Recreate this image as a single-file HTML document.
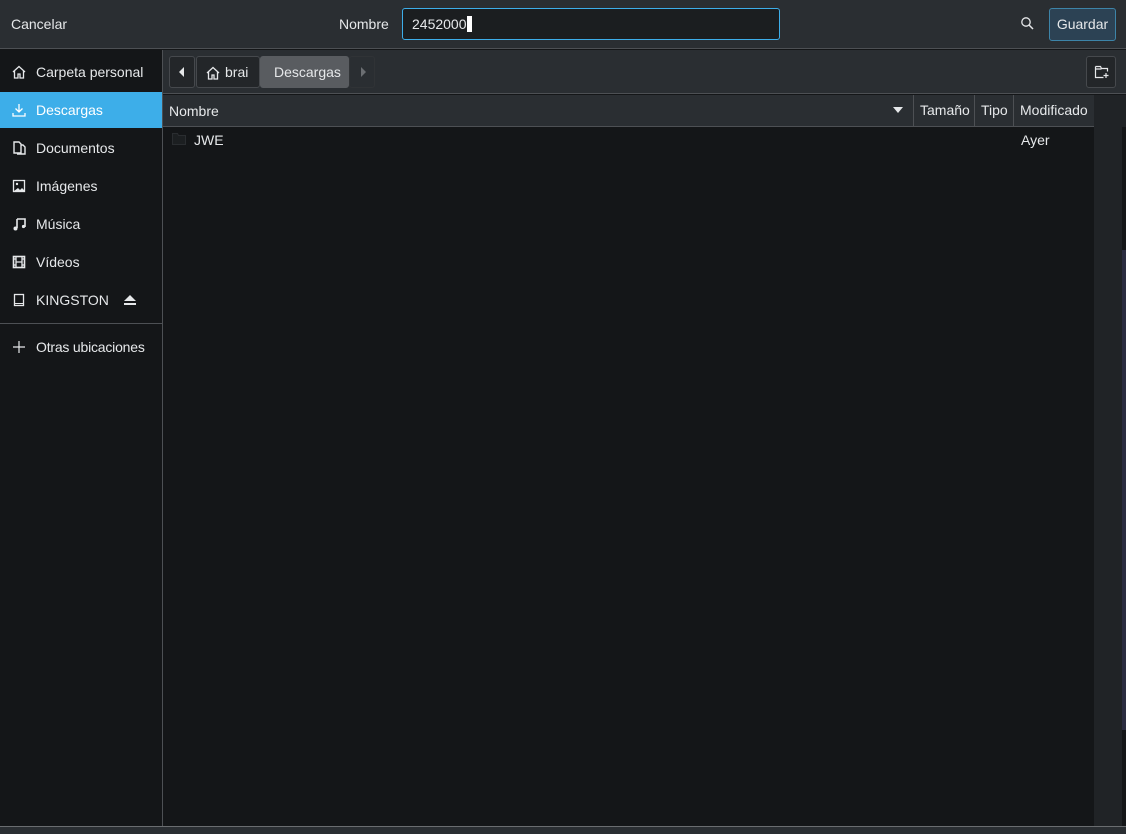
<!DOCTYPE html>
<html><head><meta charset="utf-8"><style>
*{margin:0;padding:0;box-sizing:border-box}
body{width:1126px;height:834px;background:#141618;font-family:"Liberation Sans",sans-serif;font-size:14px;color:#e6e8ea;position:relative;overflow:hidden}
.a{position:absolute}
.hdr{left:0;top:0;width:1126px;height:49px;background:#2a2e32;border-bottom:1px solid #4d5054}
.side{left:0;top:50px;width:163px;height:777px;background:#141618;border-right:1px solid #4d5054}
.item{position:absolute;left:0;width:162px;height:36px;line-height:36px;padding-left:36px}
.item svg{position:absolute;left:12px;top:11px}
.bc{left:163px;top:50px;width:963px;height:44px;background:#2a2e32;border-bottom:1px solid #4d5054}
.btn{position:absolute;border:1px solid #46494d;border-radius:3px;background:#232629;height:32px;top:6px}
.colh{left:163px;top:95px;width:931px;height:32px;background:#2a2e32;border-bottom:1px solid #4d5054}
.ch{position:absolute;top:0;height:31px;line-height:31px;border-left:1px solid #4d5054;padding-left:6px}
</style></head><body>
<div class="a hdr">
 <div class="a" style="left:11px;top:16px">Cancelar</div>
 <div class="a" style="left:339px;top:16px">Nombre</div>
 <div class="a" style="left:402px;top:8px;width:378px;height:32px;border:1px solid #3daee9;border-radius:3px;background:#1b1e20;padding:7px 0 0 9px">2452000<span style="display:inline-block;width:5px;height:16px;background:#fff;vertical-align:-3px"></span></div>
 <svg class="a" style="left:1020px;top:16px" width="16" height="16" viewBox="0 0 16 16"><circle cx="6" cy="6" r="4.2" fill="none" stroke="#e6e8ea" stroke-width="1.3"/><path d="M9 9l4 4" stroke="#e6e8ea" stroke-width="1.5"/></svg>
 <div class="a" style="left:1049px;top:8px;width:67px;height:33px;border:1px solid #3d84a8;border-radius:3px;background:#2c4254;text-align:center;line-height:31px">Guardar</div>
</div>
<div class="a side">
 <div class="item" style="top:4px"><svg width="14" height="14" viewBox="0 0 14 14"><path d="M1 7L7 1.5 13 7M2.5 6v7h3.5v-4h2v4h3.5V6" fill="none" stroke="#e6e8ea" stroke-width="1.3"/></svg>Carpeta personal</div>
 <div class="item" style="top:42px;background:#3daee9;color:#fff"><svg width="14" height="14" viewBox="0 0 14 14"><path d="M7 1v8M3.5 5.5L7 9l3.5-3.5M1 10v3h12v-3" fill="none" stroke="#fff" stroke-width="1.3"/></svg>Descargas</div>
 <div class="item" style="top:80px"><svg width="14" height="14" viewBox="0 0 14 14"><path d="M2 1h5l2 2v9H2z M9 4h2l2 2v7H5" fill="none" stroke="#e6e8ea" stroke-width="1.4"/></svg>Documentos</div>
 <div class="item" style="top:118px"><svg width="14" height="14" viewBox="0 0 14 14"><rect x="1.5" y="1.5" width="11" height="11" fill="none" stroke="#e6e8ea" stroke-width="1.3"/><circle cx="5" cy="5" r="1.2" fill="#e6e8ea"/><path d="M2 12l4-3 2 2 2-2 3 3z" fill="#e6e8ea"/></svg>Imágenes</div>
 <div class="item" style="top:156px"><svg width="14" height="14" viewBox="0 0 14 14"><path d="M5 2h8v8M5 2v9" fill="none" stroke="#e6e8ea" stroke-width="1.6"/><circle cx="3.5" cy="11.5" r="2" fill="#e6e8ea"/><circle cx="11.5" cy="9.5" r="1.6" fill="#e6e8ea"/></svg>Música</div>
 <div class="item" style="top:194px"><svg width="14" height="14" viewBox="0 0 14 14"><rect x="1.5" y="1.5" width="11" height="11" fill="none" stroke="#e6e8ea" stroke-width="1.6"/><path d="M4 1v12M10 1v12M4 7h6M1 4h3M1 10h3M10 4h3M10 10h3" stroke="#e6e8ea" stroke-width="1.3"/></svg>Vídeos</div>
 <div class="item" style="top:232px"><svg width="14" height="14" viewBox="0 0 14 14"><rect x="2.5" y="1.5" width="9" height="11" fill="none" stroke="#e6e8ea" stroke-width="1.3"/><path d="M3 10.5h8" stroke="#e6e8ea"/></svg>KINGSTON<svg width="14" height="14" viewBox="0 0 14 14" style="left:123px"><path d="M7 2l6 6H1z M1 10h12v2H1z" fill="#e6e8ea"/></svg></div>
 <div class="a" style="left:0;top:273px;width:162px;height:1px;background:#4d5054"></div>
 <div class="item" style="top:279px;letter-spacing:-0.2px"><svg width="14" height="14" viewBox="0 0 14 14"><path d="M7 1v12M1 7h12" stroke="#e6e8ea" stroke-width="1.2"/></svg>Otras ubicaciones</div>
</div>
<div class="a bc">
 <div class="btn" style="left:6px;width:26px"><svg class="a" style="left:8px;top:9px" width="8" height="12"><path d="M6 1L1 6l5 5z" fill="#e6e8ea"/></svg></div>
 <div class="btn" style="left:33px;width:64px"><svg class="a" style="left:9px;top:9px" width="14" height="14" viewBox="0 0 14 14"><path d="M1 7L7 1.5 13 7M2.5 6v7h3.5v-4h2v4h3.5V6" fill="none" stroke="#e6e8ea" stroke-width="1.3"/></svg><span class="a" style="left:28px;top:7px">brai</span></div>
 <div class="btn" style="left:97px;width:89px;background:#595c60;border-color:#595c60"><span class="a" style="left:13px;top:7px">Descargas</span></div>
 <div class="btn" style="left:186px;width:26px;border-color:#303336;background:#2a2e32"><svg class="a" style="left:10px;top:9px" width="8" height="12"><path d="M1 1l5 5-5 5z" fill="#6b6e72"/></svg></div>
 <div class="btn" style="left:923px;width:30px"><svg class="a" style="left:7px;top:7px" width="16" height="16" viewBox="0 0 16 16"><path d="M1.5 2.5h5l1 2h6v3M1.5 2.5v11h8M1.5 5h6" fill="none" stroke="#e6e8ea" stroke-width="1.2"/><path d="M12 9v5M9.5 11.5h5" stroke="#e6e8ea" stroke-width="1.2"/></svg></div>
</div>
<div class="a colh">
 <div class="a" style="left:6px;top:8px">Nombre</div>
 <svg class="a" style="left:730px;top:12px" width="10" height="6"><path d="M0 0h10L5 6z" fill="#e6e8ea"/></svg>
 <div class="ch" style="left:750px;width:61px">Tamaño</div>
 <div class="ch" style="left:811px;width:39px">Tipo</div>
 <div class="ch" style="left:850px;width:81px">Modificado</div>
</div>
<div class="a" style="left:1094px;top:127px;width:28px;height:700px;background:#202326"></div>
<div class="a" style="left:1094px;top:95px;width:32px;height:32px;background:#202326"></div>
<svg class="a" style="left:172px;top:133px" width="14" height="12"><path d="M.5 .5h5l1 2h7v9H.5z" fill="#1c1f21" stroke="#2a2d30"/></svg>
<div class="a" style="left:194px;top:132px">JWE</div>
<div class="a" style="left:1021px;top:132px">Ayer</div>
<div class="a" style="left:1122px;top:250px;width:4px;height:480px;background:#2a2c40"></div>
<div class="a" style="left:0;top:826px;width:1126px;height:1px;background:#6a6d70"></div>
<div class="a" style="left:0;top:827px;width:1126px;height:7px;background:#2a2e32"></div>
</body></html>
